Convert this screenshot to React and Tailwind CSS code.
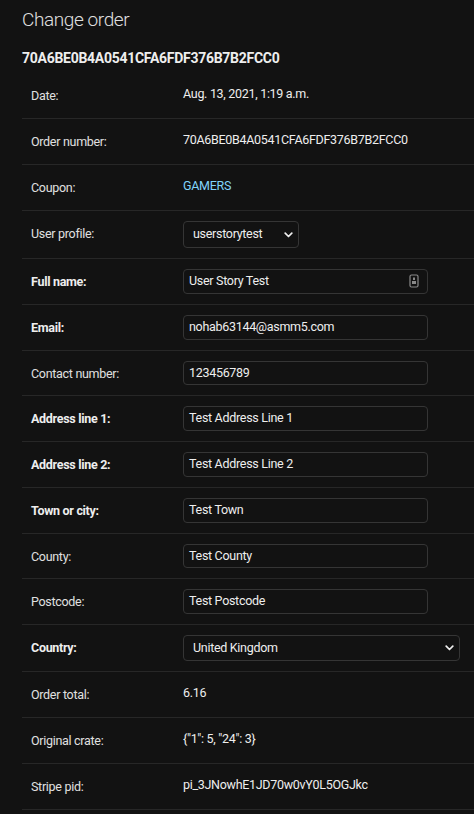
import React from 'react';

const Chevron = () => (
  <svg width="9" height="6" viewBox="0 0 9 6" fill="none" className="shrink-0">
    <path d="M1.2 1.2l3.3 3.3 3.3-3.3" stroke="#eeeeee" strokeWidth="1.7" strokeLinecap="round" strokeLinejoin="round" />
  </svg>
);

const ContactIcon = () => (
  <svg width="10" height="14" viewBox="0 0 10 14" fill="none" className="shrink-0">
    <rect x="1" y="1" width="8" height="12" rx="1.5" stroke="#8a8a8a" strokeWidth="1.2" />
    <rect x="4" y="3.5" width="2" height="2.5" fill="#8a8a8a" />
    <rect x="3" y="7" width="4" height="3" fill="#8a8a8a" />
  </svg>
);

const Row = ({ label, required, children }) => (
  <div className="flex border-b border-[#272727] py-[10px] pl-[9px]">
    <div
      className={`w-[152px] shrink-0 pt-[5px] text-[12.5px] leading-[16px] tracking-[-0.3px] ${
        required ? 'font-bold text-[#eeeeee]' : 'text-[#e0e0e0]'
      }`}
    >
      {label}:
    </div>
    <div className="min-w-0">{children}</div>
  </div>
);

const ReadOnly = ({ children, link }) => (
  <div
    className={`min-h-[25px] pt-[3px] text-[12.5px] leading-[16px] tracking-[-0.3px] ${
      link ? 'text-[#81d4fa]' : 'text-[#eeeeee]'
    }`}
  >
    {children}
  </div>
);

const TextInput = ({ value, icon }) => (
  <div className="flex h-[24.75px] w-[245px] items-center justify-between rounded-[4px] border border-[#353535] bg-[#121212] pl-[5px] pr-[8px] text-[12.5px] tracking-[-0.3px] text-[#eeeeee]">
    <span>{value}</span>
    {icon && <ContactIcon />}
  </div>
);

const Select = ({ value, width, height }) => (
  <div
    className={`flex items-center justify-between rounded-[4px] border border-[#353535] bg-[#121212] pl-[9px] pr-[5px] text-[12.5px] tracking-[-0.3px] text-[#eeeeee] ${width} ${height}`}
  >
    <span>{value}</span>
    <Chevron />
  </div>
);

export default function App() {
  return (
    <div className="min-h-screen bg-[#121212] pl-[22px] font-['Roboto','Liberation_Sans',sans-serif]">
      <h1 className="pt-[8px] text-[19px] font-light leading-[24px] tracking-[-0.4px] text-[#e0e0e0]">
        Change order
      </h1>
      <h2 className="mt-[18px] text-[14px] font-bold leading-[17px] tracking-[-0.28px] text-[#eeeeee]">
        70A6BE0B4A0541CFA6FDF376B7B2FCC0
      </h2>

      <div className="mt-[6px]">
        <Row label="Date">
          <ReadOnly>Aug. 13, 2021, 1:19 a.m.</ReadOnly>
        </Row>
        <Row label="Order number">
          <ReadOnly>70A6BE0B4A0541CFA6FDF376B7B2FCC0</ReadOnly>
        </Row>
        <Row label="Coupon">
          <ReadOnly link>GAMERS</ReadOnly>
        </Row>
        <Row label="User profile">
          <Select value="userstorytest" width="w-[116px]" height="h-[27px]" />
        </Row>
        <Row label="Full name" required>
          <TextInput value="User Story Test" icon />
        </Row>
        <Row label="Email" required>
          <TextInput value="nohab63144@asmm5.com" />
        </Row>
        <Row label="Contact number">
          <TextInput value="123456789" />
        </Row>
        <Row label="Address line 1" required>
          <TextInput value="Test Address Line 1" />
        </Row>
        <Row label="Address line 2" required>
          <TextInput value="Test Address Line 2" />
        </Row>
        <Row label="Town or city" required>
          <TextInput value="Test Town" />
        </Row>
        <Row label="County">
          <TextInput value="Test County" />
        </Row>
        <Row label="Postcode">
          <TextInput value="Test Postcode" />
        </Row>
        <Row label="Country" required>
          <Select value="United Kingdom" width="w-[277px]" height="h-[26px]" />
        </Row>
        <Row label="Order total">
          <ReadOnly>6.16</ReadOnly>
        </Row>
        <Row label="Original crate">
          <ReadOnly>{'{"1": 5, "24": 3}'}</ReadOnly>
        </Row>
        <Row label="Stripe pid">
          <ReadOnly>pi_3JNowhE1JD70w0vY0L5OGJkc</ReadOnly>
        </Row>
      </div>
    </div>
  );
}
